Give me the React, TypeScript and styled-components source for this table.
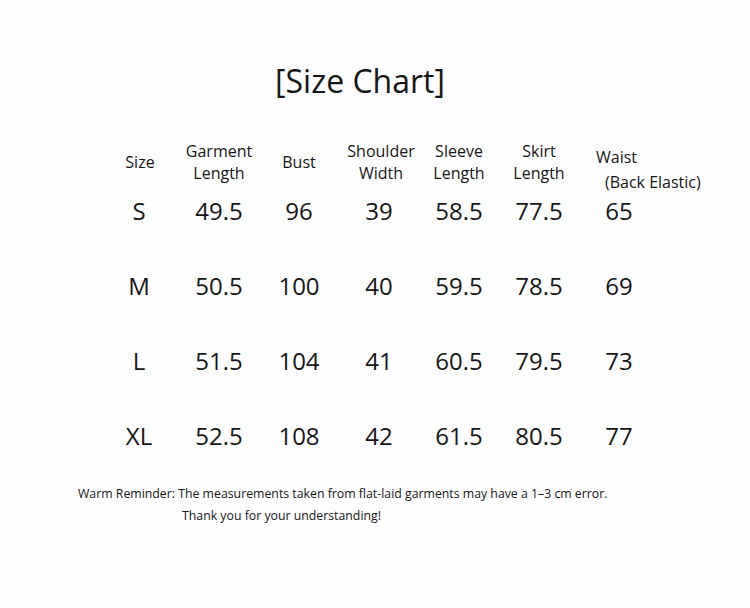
import * as React from 'react';
import styled, { createGlobalStyle } from 'styled-components';

const GlobalStyle = createGlobalStyle`
  html, body {
    margin: 0;
    padding: 0;
    background: #ffffff;
  }
  body {
    font-family: 'Open Sans', 'Noto Sans', sans-serif;
    color: #161616;
  }
`;

const Page = styled.div`
  width: 750px;
  height: 608px;
  background: #fefefe;
  overflow: hidden;
  display: flex;
  flex-direction: column;
`;

const Title = styled.h1`
  margin: 61px 0 0 0;
  width: 720px;
  text-align: center;
  font-size: 32px;
  line-height: 40px;
  font-weight: 400;
`;

const Table = styled.div`
  margin: 39px 0 0 99px;
  display: grid;
  grid-template-columns: repeat(7, 80px);
`;

const HeadCell = styled.div<{ $shift?: number }>`
  height: 44px;
  display: flex;
  flex-direction: column;
  justify-content: center;
  align-items: center;
  font-size: 16px;
  line-height: 22px;
  padding-left: ${(p) => p.$shift ?? 0}px;
  white-space: nowrap;
`;

const WaistCell = styled.div`
  height: 44px;
  font-size: 16px;
  line-height: 22px;
  white-space: nowrap;
  padding: 6px 0 0 17px;
  box-sizing: border-box;
`;

const WaistNote = styled.div`
  padding-left: 9px;
  margin-top: 3px;
`;

const Cell = styled.div<{ $first?: boolean }>`
  height: 30px;
  margin-top: ${(p) => (p.$first ? 12 : 45)}px;
  text-align: center;
  font-size: 24px;
  line-height: 30px;
`;

const Notes = styled.div`
  margin: 32px 0 0 78px;
  font-size: 12.3px;
  line-height: 22px;
`;

const NoteLine = styled.div<{ $indent?: number }>`
  padding-left: ${(p) => p.$indent ?? 0}px;
  white-space: nowrap;
`;

const rows = [
  ['S', '49.5', '96', '39', '58.5', '77.5', '65'],
  ['M', '50.5', '100', '40', '59.5', '78.5', '69'],
  ['L', '51.5', '104', '41', '60.5', '79.5', '73'],
  ['XL', '52.5', '108', '42', '61.5', '80.5', '77'],
];

export default function App() {
  return (
    <Page>
      <GlobalStyle />
      <Title>[Size Chart]</Title>
      <Table>
        <HeadCell $shift={2}>Size</HeadCell>
        <HeadCell>
          <span>Garment</span>
          <span>Length</span>
        </HeadCell>
        <HeadCell>Bust</HeadCell>
        <HeadCell $shift={4}>
          <span>Shoulder</span>
          <span>Width</span>
        </HeadCell>
        <HeadCell>
          <span>Sleeve</span>
          <span>Length</span>
        </HeadCell>
        <HeadCell>
          <span>Skirt</span>
          <span>Length</span>
        </HeadCell>
        <WaistCell>
          <div>Waist</div>
          <WaistNote>(Back Elastic)</WaistNote>
        </WaistCell>
        {rows.map((row, i) =>
          row.map((v, j) => (
            <Cell key={`${i}-${j}`} $first={i === 0}>
              {v}
            </Cell>
          ))
        )}
      </Table>
      <Notes>
        <NoteLine>
          Warm Reminder: The measurements taken from flat-laid garments may have a 1–3 cm error.
        </NoteLine>
        <NoteLine $indent={104}>Thank you for your understanding!</NoteLine>
      </Notes>
    </Page>
  );
}
